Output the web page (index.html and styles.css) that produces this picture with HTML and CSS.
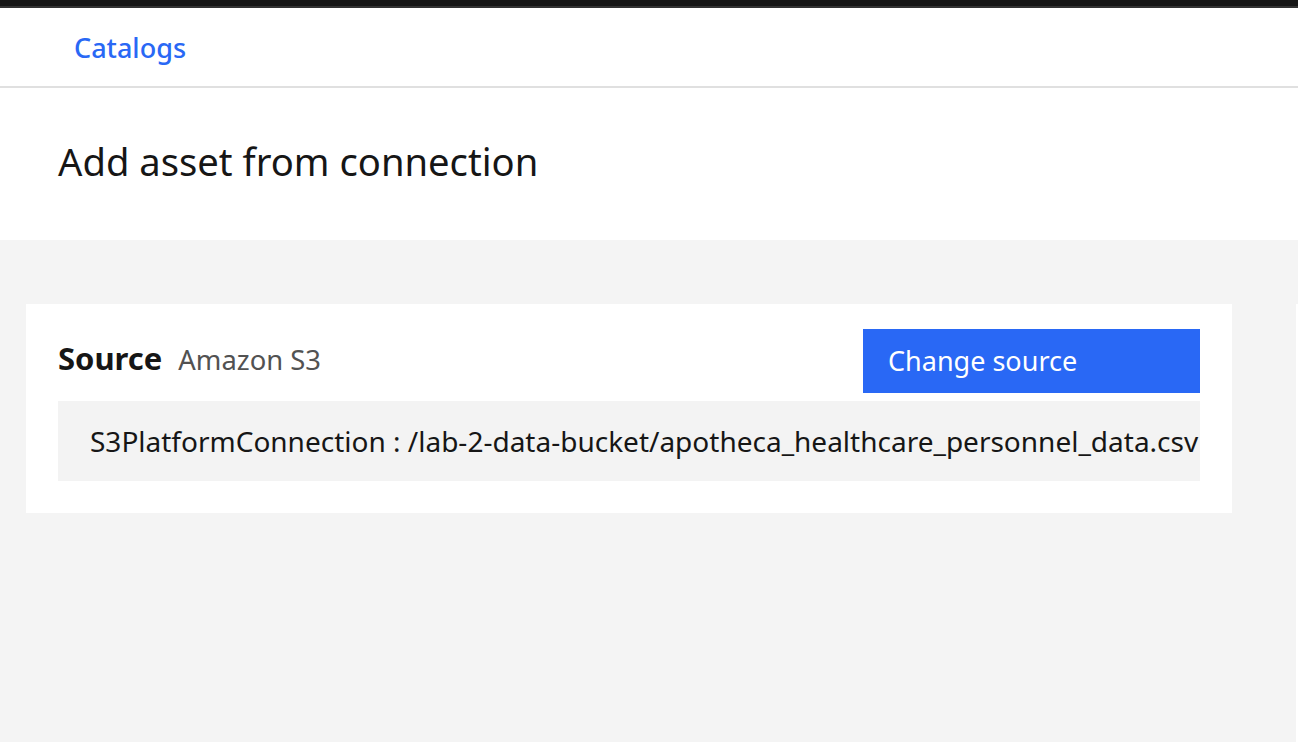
FILE: index.html
```html
<!DOCTYPE html>
<html lang="en">
<head>
<meta charset="utf-8">
<title>Add asset from connection</title>
<link rel="stylesheet" href="styles.css">
</head>
<body>
<div class="topbar"></div>
<header class="header">
  <a class="crumb" href="#">Catalogs</a>
</header>
<section class="titlebar">
  <h1 class="title">Add asset from connection</h1>
</section>
<main class="content">
  <div class="card">
    <div class="card-head">
      <div class="source">
        <span class="source-label">Source</span>
        <span class="source-type">Amazon S3</span>
      </div>
      <button class="btn-primary" type="button">Change source</button>
    </div>
    <div class="path-box">
      <span class="path-text">S3PlatformConnection : /lab-2-data-bucket/apotheca_healthcare_personnel_data.csv</span>
    </div>
  </div>
  <div class="side-panel"></div>
</main>
</body>
</html>
```
FILE: styles.css
```css
* { box-sizing: border-box; }
html, body { margin: 0; padding: 0; height: 100%; }
body {
  font-family: "Noto Sans", "Open Sans", sans-serif;
  color: #161616;
  background: #f4f4f4;
  display: flex;
  flex-direction: column;
  overflow: hidden;
}
.topbar {
  height: 8px;
  background: #161616;
  border-bottom: 2px solid #333333;
  flex: none;
}
.header {
  height: 80px;
  background: #ffffff;
  border-bottom: 2px solid #e0e0e0;
  display: flex;
  align-items: center;
  padding-left: 74px;
  flex: none;
}
.crumb {
  color: #2968f5;
  text-decoration: none;
  font-size: 27px;
  font-weight: 500;
}
.titlebar {
  height: 152px;
  background: #ffffff;
  padding-left: 58px;
  padding-top: 47px;
  flex: none;
}
.title {
  margin: 0;
  font-size: 38.2px;
  font-weight: 400;
  line-height: 52px;
}
.content {
  flex: 1;
  display: flex;
  padding-top: 64px;
  padding-left: 26px;
}
.card {
  width: 1206px;
  height: 209px;
  background: #ffffff;
  padding: 25px 32px 32px 32px;
  display: flex;
  flex-direction: column;
  gap: 8px;
}
.card-head {
  display: flex;
  justify-content: space-between;
  align-items: flex-start;
}
.source {
  display: flex;
  align-items: baseline;
  gap: 16px;
  padding-top: 8px;
}
.source-label {
  font-size: 31px;
  font-weight: 700;
}
.source-type {
  font-size: 27.4px;
  color: #525252;
}
.btn-primary {
  width: 337px;
  height: 64px;
  background: #2968f5;
  color: #ffffff;
  border: none;
  font-family: inherit;
  font-size: 27px;
  text-align: left;
  padding: 0 0 2px 25px;
}
.path-box {
  height: 80px;
  background: #f3f3f3;
  display: flex;
  align-items: center;
  padding-left: 32px;
  overflow: hidden;
  white-space: nowrap;
}
.path-text {
  font-size: 28px;
}
.side-panel {
  margin-left: 64px;
  width: 2px;
  background: #ffffff;
}
```
